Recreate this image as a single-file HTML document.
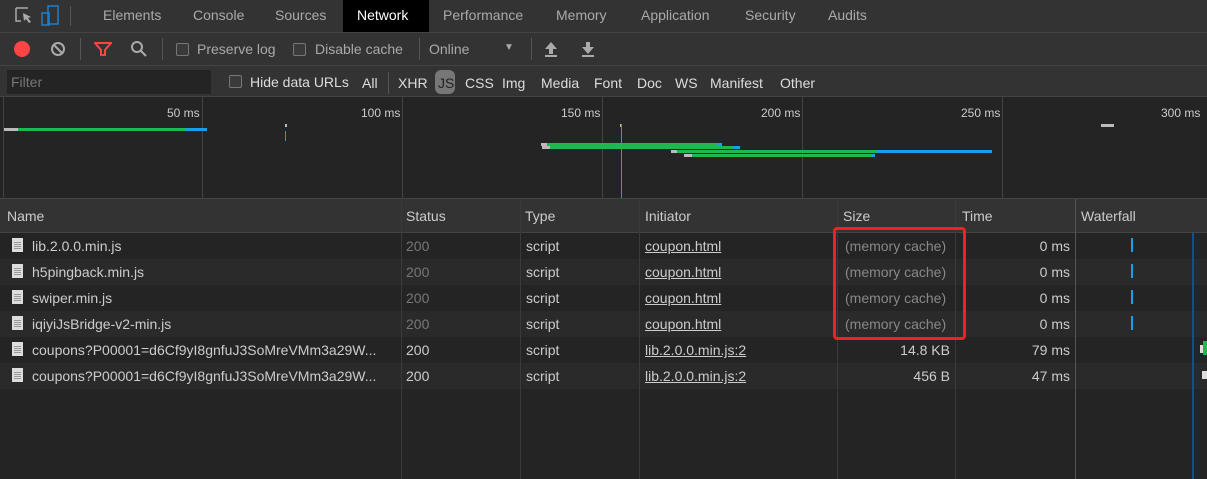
<!DOCTYPE html><html><head><style>
*{margin:0;padding:0;box-sizing:border-box}
body{width:1207px;height:479px;background:#242424;font-family:"Liberation Sans",sans-serif;font-size:14px;color:#ccc;position:relative;overflow:hidden}
.a{position:absolute;white-space:nowrap}
.bar{position:absolute;left:0;width:1207px;background:#333;border-bottom:1px solid #444}
.t{color:#aaa;top:7px}
.cb{position:absolute;width:13px;height:13px;border:1px solid #777;background:#3a3a3a;border-radius:2px}
.g{position:absolute;top:97px;width:1px;height:101px;background:#444}
.ms{position:absolute;top:106px;font-size:12px;color:#ccc}
.row{position:absolute;left:0;width:1207px;height:26px}
.c{position:absolute;top:5px}
.vl{position:absolute;top:199px;width:1px;height:280px;background:#3a3a3a}
.ic{position:absolute;left:12px;top:5px;width:11px;height:14px;background:#ddd}
.ic:after{content:"";position:absolute;left:2px;top:3px;width:7px;height:8px;background:repeating-linear-gradient(#ddd 0 1px,#999 1px 2px)}
</style></head><body>
<div class="bar" style="top:0;height:33px"></div>
<svg class="a" style="left:14px;top:6px" width="20" height="20"><path d="M2 2h12M2 2v13h5" stroke="#aaa" stroke-width="1.5" fill="none"/><path d="M9 7l8 4-3 1 3 4-2 1-3-4-2 2z" fill="#aaa"/></svg>
<svg class="a" style="left:40px;top:5px" width="20" height="22"><rect x="8" y="1" width="10" height="18" fill="none" stroke="#1a7fd0" stroke-width="1.5"/><rect x="2" y="8" width="7" height="12" fill="none" stroke="#1a7fd0" stroke-width="1.5"/></svg>
<div class="a" style="left:70px;top:6px;width:1px;height:20px;background:#555"></div>
<div class="a t" style="left:103px">Elements</div>
<div class="a t" style="left:193px">Console</div>
<div class="a t" style="left:275px">Sources</div>
<div class="a" style="left:343px;top:0;width:86px;height:32px;background:#000"></div>
<div class="a" style="left:357px;top:7px;color:#fff">Network</div>
<div class="a t" style="left:443px">Performance</div>
<div class="a t" style="left:556px">Memory</div>
<div class="a t" style="left:641px">Application</div>
<div class="a t" style="left:745px">Security</div>
<div class="a t" style="left:828px">Audits</div>
<div class="bar" style="top:33px;height:33px"></div>
<div class="a" style="left:14px;top:41px;width:16px;height:16px;border-radius:50%;background:#f44"></div>
<svg class="a" style="left:50px;top:41px" width="16" height="16"><circle cx="8" cy="8" r="6" stroke="#aaa" stroke-width="2" fill="none"/><path d="M4 4l8 8" stroke="#aaa" stroke-width="2"/></svg>
<div class="a" style="left:80px;top:38px;width:1px;height:22px;background:#555"></div>
<svg class="a" style="left:94px;top:41px" width="18" height="16"><path d="M1 2h16l-6 7v5h-4v-5z" fill="none" stroke="#f44" stroke-width="2"/></svg>
<svg class="a" style="left:130px;top:40px" width="18" height="18"><circle cx="7" cy="7" r="5" stroke="#aaa" stroke-width="2" fill="none"/><path d="M11 11l5 5" stroke="#aaa" stroke-width="2"/></svg>
<div class="a" style="left:162px;top:38px;width:1px;height:22px;background:#555"></div>
<div class="cb" style="left:176px;top:43px"></div>
<div class="a t" style="left:197px;top:41px">Preserve log</div>
<div class="cb" style="left:293px;top:43px"></div>
<div class="a t" style="left:315px;top:41px">Disable cache</div>
<div class="a" style="left:419px;top:38px;width:1px;height:22px;background:#555"></div>
<div class="a t" style="left:429px;top:41px">Online</div>
<div class="a" style="left:504px;top:42px;font-size:10px;color:#aaa">▼</div>
<div class="a" style="left:531px;top:38px;width:1px;height:22px;background:#555"></div>
<svg class="a" style="left:543px;top:41px" width="16" height="16"><path d="M8 1l6 7h-4v5h-4v-5h-4z" fill="#aaa"/><rect x="2" y="14" width="12" height="2" fill="#aaa"/></svg>
<svg class="a" style="left:580px;top:41px" width="16" height="16"><path d="M8 13l6-7h-4v-5h-4v5h-4z" fill="#aaa"/><rect x="2" y="14" width="12" height="2" fill="#aaa"/></svg>
<div class="bar" style="top:66px;height:31px"></div>
<div class="a" style="left:7px;top:70px;width:204px;height:24px;background:#242424"></div>
<div class="a" style="left:11px;top:74px;color:#777">Filter</div>
<div class="cb" style="left:229px;top:75px"></div>
<div class="a" style="left:250px;top:74px;color:#ddd">Hide data URLs</div>
<div class="a" style="left:362px;top:75px;color:#ddd">All</div>
<div class="a" style="left:388px;top:72px;width:1px;height:22px;background:#555"></div>
<div class="a" style="left:398px;top:75px;color:#ddd">XHR</div>
<div class="a" style="left:435px;top:70px;width:20px;height:24px;border-radius:6px;background:#777"></div>
<div class="a" style="left:438px;top:75px;color:#222">JS</div>
<div class="a" style="left:465px;top:75px;color:#ddd">CSS</div>
<div class="a" style="left:502px;top:75px;color:#ddd">Img</div>
<div class="a" style="left:541px;top:75px;color:#ddd">Media</div>
<div class="a" style="left:594px;top:75px;color:#ddd">Font</div>
<div class="a" style="left:637px;top:75px;color:#ddd">Doc</div>
<div class="a" style="left:675px;top:75px;color:#ddd">WS</div>
<div class="a" style="left:710px;top:75px;color:#ddd">Manifest</div>
<div class="a" style="left:780px;top:75px;color:#ddd">Other</div>
<div class="g" style="left:3px"></div><div class="g" style="left:202px"></div><div class="g" style="left:402px"></div><div class="g" style="left:602px"></div><div class="g" style="left:802px"></div><div class="g" style="left:1002px"></div>
<div class="ms" style="left:167px">50 ms</div><div class="ms" style="left:361px">100 ms</div><div class="ms" style="left:561px">150 ms</div><div class="ms" style="left:761px">200 ms</div><div class="ms" style="left:961px">250 ms</div><div class="ms" style="left:1161px">300 ms</div>
<div class="a" style="left:4px;top:128px;width:14px;height:3px;background:#bbb"></div>
<div class="a" style="left:18px;top:128px;width:168px;height:3px;background:#1fb74f"></div>
<div class="a" style="left:186px;top:128px;width:21px;height:3px;background:#1a9ee8"></div>
<div class="a" style="left:285px;top:124px;width:2px;height:3px;background:#bbb"></div>
<div class="a" style="left:285px;top:131px;width:1px;height:10px;background:#1a9ee8"></div>
<div class="a" style="left:620px;top:124px;width:2px;height:3px;background:#bbb"></div>
<div class="a" style="left:621px;top:124px;width:1px;height:74px;background:#1a9ee8"></div>
<div class="a" style="left:541px;top:143px;width:6px;height:3px;background:#bbb"></div><div class="a" style="left:547px;top:143px;width:170px;height:3px;background:#1fb74f"></div><div class="a" style="left:717px;top:143px;width:5px;height:3px;background:#1a9ee8"></div>
<div class="a" style="left:542px;top:146px;width:8px;height:3px;background:#bbb"></div><div class="a" style="left:550px;top:146px;width:183px;height:3px;background:#1fb74f"></div><div class="a" style="left:733px;top:146px;width:7px;height:3px;background:#1a9ee8"></div>
<div class="a" style="left:671px;top:150px;width:6px;height:3px;background:#bbb"></div><div class="a" style="left:677px;top:150px;width:200px;height:3px;background:#1fb74f"></div><div class="a" style="left:877px;top:150px;width:115px;height:3px;background:#1a9ee8"></div>
<div class="a" style="left:684px;top:154px;width:8px;height:3px;background:#bbb"></div><div class="a" style="left:692px;top:154px;width:180px;height:3px;background:#1fb74f"></div><div class="a" style="left:872px;top:154px;width:3px;height:3px;background:#1a9ee8"></div>
<div class="a" style="left:1101px;top:124px;width:13px;height:3px;background:#bbb"></div>
<div class="a" style="left:0;top:198px;width:1207px;height:35px;background:#333;border-top:1px solid #444;border-bottom:1px solid #444"></div>
<div class="a" style="left:7px;top:208px">Name</div>
<div class="a" style="left:406px;top:208px">Status</div>
<div class="a" style="left:525px;top:208px">Type</div>
<div class="a" style="left:645px;top:208px">Initiator</div>
<div class="a" style="left:843px;top:208px">Size</div>
<div class="a" style="left:962px;top:208px">Time</div>
<div class="a" style="left:1081px;top:208px">Waterfall</div>
<div class="row" style="top:233px;background:#242424"></div>
<div class="row" style="top:259px;background:#2a2a2a"></div>
<div class="row" style="top:285px;background:#242424"></div>
<div class="row" style="top:311px;background:#2a2a2a"></div>
<div class="row" style="top:337px;background:#242424"></div>
<div class="row" style="top:363px;background:#2a2a2a"></div>
<div class="vl" style="left:401px"></div><div class="vl" style="left:520px"></div><div class="vl" style="left:639px"></div><div class="vl" style="left:837px"></div><div class="vl" style="left:955px"></div><div class="vl" style="left:1075px;background:#555"></div>
<div class="a" style="left:1192px;top:233px;width:2px;height:246px;background:#0d4f96"></div>

<div class="row" style="top:233px"><div class="ic"></div><div class="c" style="left:32px">lib.2.0.0.min.js</div><div class="c" style="left:406px;color:#777">200</div><div class="c" style="left:526px">script</div><div class="c" style="left:645px;text-decoration:underline">coupon.html</div><div class="c" style="left:845px;color:#888">(memory cache)</div><div class="c" style="right:137px">0 ms</div><div class="a" style="left:1131px;top:5px;width:2px;height:14px;background:#1a9ee8"></div></div>
<div class="row" style="top:259px"><div class="ic"></div><div class="c" style="left:32px">h5pingback.min.js</div><div class="c" style="left:406px;color:#777">200</div><div class="c" style="left:526px">script</div><div class="c" style="left:645px;text-decoration:underline">coupon.html</div><div class="c" style="left:845px;color:#888">(memory cache)</div><div class="c" style="right:137px">0 ms</div><div class="a" style="left:1131px;top:5px;width:2px;height:14px;background:#1a9ee8"></div></div>
<div class="row" style="top:285px"><div class="ic"></div><div class="c" style="left:32px">swiper.min.js</div><div class="c" style="left:406px;color:#777">200</div><div class="c" style="left:526px">script</div><div class="c" style="left:645px;text-decoration:underline">coupon.html</div><div class="c" style="left:845px;color:#888">(memory cache)</div><div class="c" style="right:137px">0 ms</div><div class="a" style="left:1131px;top:5px;width:2px;height:14px;background:#1a9ee8"></div></div>
<div class="row" style="top:311px"><div class="ic"></div><div class="c" style="left:32px">iqiyiJsBridge-v2-min.js</div><div class="c" style="left:406px;color:#777">200</div><div class="c" style="left:526px">script</div><div class="c" style="left:645px;text-decoration:underline">coupon.html</div><div class="c" style="left:845px;color:#888">(memory cache)</div><div class="c" style="right:137px">0 ms</div><div class="a" style="left:1131px;top:5px;width:2px;height:14px;background:#1a9ee8"></div></div>
<div class="row" style="top:337px"><div class="ic"></div><div class="c" style="left:32px">coupons?P00001=d6Cf9yI8gnfuJ3SoMreVMm3a29W...</div><div class="c" style="left:406px">200</div><div class="c" style="left:526px">script</div><div class="c" style="left:645px;text-decoration:underline">lib.2.0.0.min.js:2</div><div class="c" style="right:257px">14.8 KB</div><div class="c" style="right:137px">79 ms</div><div class="a" style="left:1200px;top:8px;width:3px;height:8px;background:#ddd"></div><div class="a" style="left:1203px;top:4px;width:4px;height:14px;background:#1fb74f"></div></div>
<div class="row" style="top:363px"><div class="ic"></div><div class="c" style="left:32px">coupons?P00001=d6Cf9yI8gnfuJ3SoMreVMm3a29W...</div><div class="c" style="left:406px">200</div><div class="c" style="left:526px">script</div><div class="c" style="left:645px;text-decoration:underline">lib.2.0.0.min.js:2</div><div class="c" style="right:257px">456 B</div><div class="c" style="right:137px">47 ms</div><div class="a" style="left:1202px;top:8px;width:5px;height:8px;background:#ddd"></div></div>
<div class="a" style="left:833px;top:227px;width:133px;height:113px;border:3px solid #ee2222;border-radius:4px"></div>
</body></html>
